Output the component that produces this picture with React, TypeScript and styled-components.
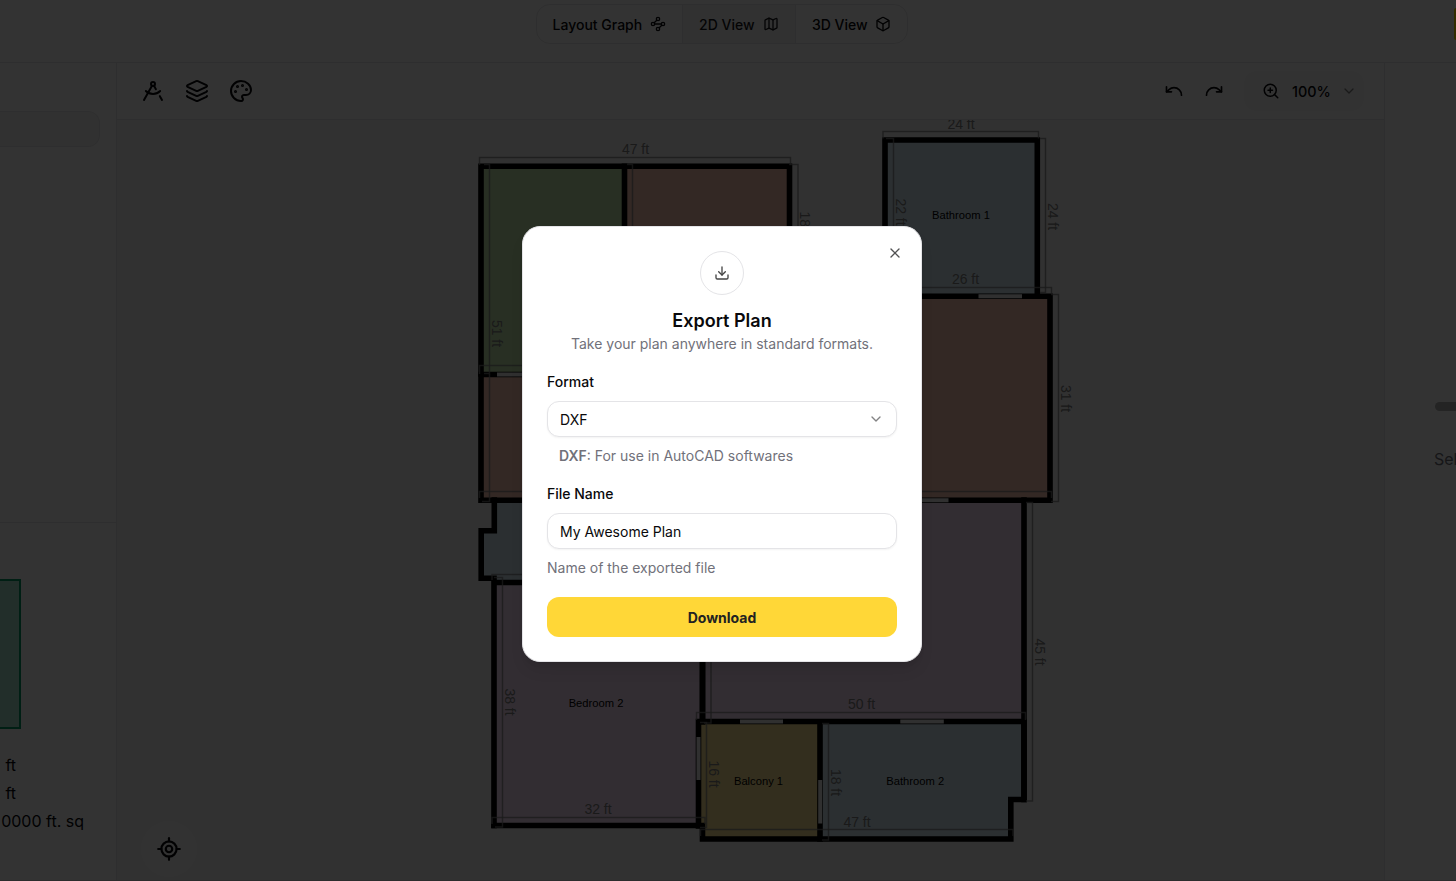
import React from "react";
import styled, { createGlobalStyle } from "styled-components";
import {
  Box,
  ChevronDown,
  Download,
  DraftingCompass,
  Layers,
  LocateFixed,
  Map as MapIcon,
  Palette,
  Redo,
  Undo,
  Waypoints,
  X,
  ZoomIn,
} from "lucide-react";

const GlobalStyle = createGlobalStyle`
  * { box-sizing: border-box; }
  body {
    margin: 0;
    background: #fff;
    color: #09090b;
    font-family: Inter, "Liberation Sans", sans-serif;
    font-size: 14px;
    overflow: hidden;
  }
  button, input { font: inherit; color: inherit; }
`;

const line = "#e6e6e8";

const Page = styled.div`
  position: relative;
  width: 1456px;
  height: 881px;
  display: flex;
  flex-direction: column;
  overflow: hidden;
`;

const Header = styled.header`
  height: 63px;
  flex: none;
  display: flex;
  align-items: flex-start;
  justify-content: space-between;
  padding: 4px 0 0 536px;
  border-bottom: 1px solid ${line};
`;

const Segmented = styled.nav`
  display: flex;
  width: 372px;
  height: 40px;
  border: 1px solid ${line};
  border-radius: 14px;
  overflow: hidden;
`;

const Segment = styled.button<{ $width: number; $active?: boolean }>`
  display: flex;
  align-items: center;
  gap: 8px;
  width: ${(p) => p.$width}px;
  padding: 0 0 0 16px;
  border: 0;
  border-right: 1px solid ${line};
  background: ${(p) => (p.$active ? "#f4f4f5" : "transparent")};
  color: ${(p) => (p.$active ? "#18181b" : "#09090b")};
  font-weight: 500;
  white-space: nowrap;
  &:first-child { padding-left: 15.5px; }
  &:last-child { border-right: 0; gap: 7px; }
`;

const HeaderAction = styled.div`
  width: 2px;
  height: 32px;
  margin-top: 4px;
  background: #ffd900;
  border-radius: 2px 0 0 2px;
`;

const Body = styled.div`
  flex: 1;
  min-height: 0;
  display: flex;
`;

const Sidebar = styled.aside`
  width: 117px;
  flex: none;
  display: flex;
  flex-direction: column;
  border-right: 1px solid ${line};
`;

const SidebarTop = styled.div`
  height: 460px;
  padding-top: 48px;
  border-bottom: 1px solid ${line};
`;

const SearchField = styled.div`
  width: 100px;
  height: 36px;
  background: #f5f5f5;
  border: 1px solid ${line};
  border-left: 0;
  border-radius: 0 12px 12px 0;
`;

const PlotPreview = styled.div`
  width: 21px;
  height: 150px;
  margin: 56px 0 22px;
  background: #a8e6d0;
  border: 2px solid #009966;
  border-left: 0;
`;

const Measure = styled.div<{ $end: number }>`
  display: flex;
  justify-content: flex-end;
  width: ${(p) => p.$end}px;
  height: 28px;
  line-height: 28px;
  font-size: 16px;
  white-space: nowrap;
`;

const Workspace = styled.main`
  width: 1267px;
  flex: none;
  display: flex;
  flex-direction: column;
`;

const Toolbar = styled.div`
  height: 57px;
  flex: none;
  display: flex;
  align-items: center;
  justify-content: space-between;
  padding: 0 20px 0 24px;
  border-bottom: 1px solid ${line};
`;

const ToolGroup = styled.div<{ $gap: number }>`
  display: flex;
  align-items: center;
  gap: ${(p) => p.$gap}px;
`;

const ZoomControl = styled.div`
  display: flex;
  align-items: center;
  width: 120px;
  height: 40px;
  padding-left: 18px;
  background: #fbfbfb;
  border-radius: 12px;
  font-weight: 450;
  font-size: 14.4px;
  span { margin: 0 10px 0 12px; }
  svg:last-child { opacity: 0.5; }
`;

const CanvasArea = styled.div`
  position: relative;
  flex: 1;
  min-height: 0;
  background: #f4f4f4;
  svg { display: block; }
`;

const LocateButton = styled.button`
  position: absolute;
  left: 24px;
  bottom: 3px;
  width: 56px;
  height: 56px;
  display: grid;
  place-items: center;
  padding: 0;
  border: 0;
  border-radius: 50%;
  background: #fbfbfb;
`;

const Inspector = styled.aside`
  flex: 1;
  min-width: 0;
  border-left: 1px solid ${line};
  display: flex;
  flex-direction: column;
  align-items: flex-end;
  padding-top: 339px;
`;

const InspectorBar = styled.div`
  width: 21px;
  height: 9px;
  border-radius: 5px 0 0 5px;
  background: #b4b4b4;
`;

const InspectorHint = styled.div`
  width: 22px;
  margin-top: 36px;
  font-size: 16px;
  line-height: 24px;
  color: #71717a;
  white-space: nowrap;
`;

const BottomEdge = styled.div`
  height: 1px;
  flex: none;
  background: #dcdcdc;
`;

const Overlay = styled.div`
  position: absolute;
  inset: 0;
  padding: 226px 0 0 522px;
  background: rgba(0, 0, 0, 0.8);
`;

const Dialog = styled.section`
  position: relative;
  width: 400px;
  height: 436px;
  padding: 24px;
  display: flex;
  flex-direction: column;
  align-items: stretch;
  background: #fff;
  border: 1px solid #e4e4e7;
  border-radius: 18px;
  box-shadow: 0 10px 15px -3px rgba(0, 0, 0, 0.1), 0 4px 6px -4px rgba(0, 0, 0, 0.1);
`;

const CloseButton = styled.button`
  position: absolute;
  top: 18px;
  right: 18px;
  width: 16px;
  height: 16px;
  padding: 0;
  border: 0;
  background: none;
  opacity: 0.7;
  svg { display: block; }
`;

const DialogIcon = styled.div`
  align-self: center;
  width: 44px;
  height: 44px;
  display: grid;
  place-items: center;
  border: 1px solid #e4e4e7;
  border-radius: 50%;
  color: #444;
`;

const Title = styled.h2`
  margin: 12px 0 0;
  font-size: 18px;
  font-weight: 600;
  line-height: 28px;
  text-align: center;
`;

const Subtitle = styled.p`
  margin: -1px 0 0;
  line-height: 20px;
  text-align: center;
  color: #71717a;
`;

const Field = styled.div`
  display: flex;
  flex-direction: column;
  margin-top: 18px;
`;

const Label = styled.label`
  line-height: 20px;
  font-weight: 500;
`;

const control = `
  height: 36px;
  margin-top: 9px;
  padding: 0 12px;
  border: 1px solid #e4e4e7;
  border-radius: 12px;
  background: #fff;
  box-shadow: 0 1px 2px rgba(0, 0, 0, 0.05);
`;

const Select = styled.button`
  ${control}
  display: flex;
  align-items: center;
  justify-content: space-between;
  svg { opacity: 0.5; }
`;

const TextInput = styled.input`
  ${control}
  outline: none;
`;

const Help = styled.p<{ $indent?: boolean }>`
  margin: 9px 0 0;
  padding-left: ${(p) => (p.$indent ? 12 : 0)}px;
  line-height: 20px;
  color: #71717a;
  strong { font-weight: 600; }
`;

const PrimaryButton = styled.button`
  height: 40px;
  margin-top: 19px;
  border: 0;
  border-radius: 12px;
  background: #ffd737;
  color: #222;
  font-weight: 700;
`;

const GREEN = "#c8ebaf";
const SALMON = "#ffc8b4";
const BLUE = "#d7ebf5";
const MAUVE = "#fae1fa";
const YELLOW = "#ffe696";

const rooms: [string, string][] = [
  [GREEN, "M481 166H625V374H481Z"],
  [SALMON, "M625 166H790V374H625Z"],
  [SALMON, "M481 374H790V500H481Z"],
  [BLUE, "M885 140H1037V296H885Z"],
  [SALMON, "M790 296H1050V500H790Z"],
  [BLUE, "M494 500H703V582H494V578H481V531H494Z"],
  [MAUVE, "M494 582H703V722H699V826H494Z"],
  [MAUVE, "M703 500H1024V722H703Z"],
  [YELLOW, "M699 722H820V839H703V826H699Z"],
  [BLUE, "M820 722H1024V800H1011V839H820Z"],
];

const walls = [
  "M481 374V166.3H789.5V296M624.5 166V374",
  "M885 296V140H1037.3V296",
  "M790 296.3H1050V500.3H481V374.5H624",
  "M494.3 500V530.8H481.2V578.3H494M494 825.5V582.5H702.5V721",
  "M494 825.5H702.5V839H1010.8V799.5H1024V500",
  "M698.5 721.5H1024V799.5M698.5 721.5V826M820 721.5V839M702.5 582V722",
];

const openings = [
  "M497 374.5H560",
  "M978.5 296.3H1022",
  "M905 500.3H948.5",
  "M740 721.5H783",
  "M900.3 721.5H943.8",
  "M698.5 737V780",
  "M820.2 780V823.5",
];

const dimensions = [
  "M479.5 165V157.5H790.5V165",
  "M789 164.5H798V290",
  "M484 164.5H489.5V373.5H484",
  "M627 164.5H632.5V373.5",
  "M479.5 374V365.5H624",
  "M489.5 374V501.5H482",
  "M479.5 498V491.5H624",
  "M883 138.5V131.5H1038.5V138.5",
  "M1040 138.5H1045.5V292.5H1040",
  "M886 138.5H893.5V292",
  "M894 287.5H1051.5V294",
  "M1051 294.5H1058.5V501.5H1051",
  "M900 491.5H1051.5V498",
  "M1026 502.5H1032.5V801H1026",
  "M492 580V574.5H700",
  "M494 577.5H502.5V827H495",
  "M492 824V817.5H705V824",
  "M711 600V723H704",
  "M696.5 720V712.5H1025.5V720",
  "M700 722.5H706.5V827.5H700",
  "M700.5 836V829.5H1013V836",
  "M822 723.5H828.5V840H822",
];

const dimLabels: [number, number, string, boolean][] = [
  [635.5, 149.5, "47 ft", false],
  [961, 124, "24 ft", false],
  [965.5, 279.5, "26 ft", false],
  [861.5, 704.5, "50 ft", false],
  [598, 809.5, "32 ft", false],
  [857, 822.5, "47 ft", false],
  [496.5, 333.5, "51 ft", true],
  [805, 225, "18 ft", true],
  [901, 212, "22 ft", true],
  [1053, 216.5, "24 ft", true],
  [1066, 398.5, "31 ft", true],
  [1040, 652, "45 ft", true],
  [509.5, 702, "38 ft", true],
  [713.5, 774, "16 ft", true],
  [836, 782.5, "18 ft", true],
];

const roomLabels: [number, number, string][] = [
  [961, 215, "Bathroom 1"],
  [596, 703, "Bedroom 2"],
  [758.5, 781, "Balcony 1"],
  [915.2, 781, "Bathroom 2"],
];

const FloorPlan = () => (
  <svg width="1267" height="760" viewBox="117 120 1267 760" fontFamily="Liberation Sans, Arial, sans-serif">
    {rooms.map(([fill, d]) => (
      <path key={d} d={d} fill={fill} />
    ))}
    <g fill="none" stroke="#000" strokeWidth="5.6" strokeLinecap="square">
      {walls.map((d) => (
        <path key={d} d={d} />
      ))}
    </g>
    {openings.map((d) => (
      <path key={d} d={d} stroke="#f0f0f0" strokeWidth="4" />
    ))}
    <g fill="none" stroke="#808080" strokeOpacity="0.75" strokeWidth="1.5">
      {dimensions.map((d) => (
        <path key={d} d={d} />
      ))}
    </g>
    <g fill="#808080" fontSize="14" textAnchor="middle">
      {dimLabels.map(([x, y, text, turned]) => (
        <text
          key={`${x}-${y}`}
          transform={`translate(${x} ${y})${turned ? " rotate(90)" : ""}`}
          y={turned ? 5 : 4.8}
        >
          {text}
        </text>
      ))}
    </g>
    <g fill="#000" fontSize="11.2" textAnchor="middle">
      {roomLabels.map(([x, y, text]) => (
        <text key={text} x={x} y={y + 4}>
          {text}
        </text>
      ))}
    </g>
  </svg>
);

export default function App() {
  return (
    <>
      <GlobalStyle />
      <Page>
        <Header>
          <Segmented>
            <Segment $width={146}>
              Layout Graph <Waypoints size={16} />
            </Segment>
            <Segment $width={113} $active>
              2D View <MapIcon size={16} />
            </Segment>
            <Segment $width={111}>
              3D View <Box size={16} />
            </Segment>
          </Segmented>
          <HeaderAction />
        </Header>
        <Body>
          <Sidebar>
            <SidebarTop>
              <SearchField />
            </SidebarTop>
            <PlotPreview />
            <Measure $end={16}>ft</Measure>
            <Measure $end={16}>ft</Measure>
            <Measure $end={84}>0000 ft. sq</Measure>
          </Sidebar>
          <Workspace>
            <Toolbar>
              <ToolGroup $gap={20}>
                <DraftingCompass size={24} strokeWidth={2} />
                <Layers size={24} strokeWidth={2} />
                <Palette size={24} strokeWidth={2} />
              </ToolGroup>
              <ToolGroup $gap={20}>
                <Undo size={20} strokeWidth={2} />
                <Redo size={20} strokeWidth={2} />
                <ZoomControl>
                  <ZoomIn size={18} />
                  <span>100%</span>
                  <ChevronDown size={16} />
                </ZoomControl>
              </ToolGroup>
            </Toolbar>
            <CanvasArea>
              <FloorPlan />
              <LocateButton>
                <LocateFixed size={26} />
              </LocateButton>
            </CanvasArea>
          </Workspace>
          <Inspector>
            <InspectorBar />
            <InspectorHint>Sel</InspectorHint>
          </Inspector>
        </Body>
        <BottomEdge />
        <Overlay>
          <Dialog role="dialog" aria-label="Export Plan">
            <CloseButton aria-label="Close">
              <X size={16} />
            </CloseButton>
            <DialogIcon>
              <Download size={16} />
            </DialogIcon>
            <Title>Export Plan</Title>
            <Subtitle>Take your plan anywhere in standard formats.</Subtitle>
            <Field>
              <Label>Format</Label>
              <Select>
                DXF <ChevronDown size={16} />
              </Select>
              <Help $indent>
                <strong>DXF</strong>: For use in AutoCAD softwares
              </Help>
            </Field>
            <Field>
              <Label>File Name</Label>
              <TextInput defaultValue="My Awesome Plan" />
              <Help>Name of the exported file</Help>
            </Field>
            <PrimaryButton>Download</PrimaryButton>
          </Dialog>
        </Overlay>
      </Page>
    </>
  );
}
